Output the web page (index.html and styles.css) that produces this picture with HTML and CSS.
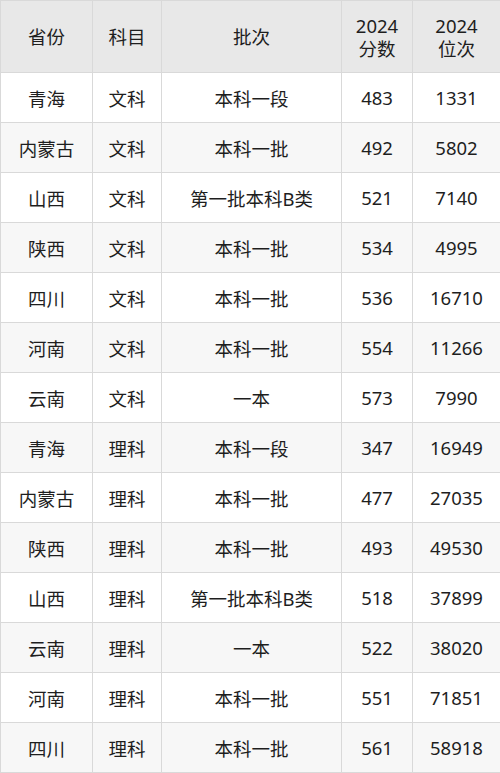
FILE: index.html
```html
<!DOCTYPE html>
<html lang="zh">
<head>
<meta charset="utf-8">
<link rel="stylesheet" href="styles.css">
</head>
<body>
<table class="score-table">
  <colgroup>
    <col class="c1"><col class="c2"><col class="c3"><col class="c4"><col class="c5">
  </colgroup>
  <thead>
    <tr><th>省份</th><th>科目</th><th>批次</th><th>2024<br>分数</th><th>2024<br>位次</th></tr>
  </thead>
  <tbody>
    <tr><td>青海</td><td>文科</td><td>本科一段</td><td>483</td><td>1331</td></tr>
    <tr><td>内蒙古</td><td>文科</td><td>本科一批</td><td>492</td><td>5802</td></tr>
    <tr><td>山西</td><td>文科</td><td>第一批本科B类</td><td>521</td><td>7140</td></tr>
    <tr><td>陕西</td><td>文科</td><td>本科一批</td><td>534</td><td>4995</td></tr>
    <tr><td>四川</td><td>文科</td><td>本科一批</td><td>536</td><td>16710</td></tr>
    <tr><td>河南</td><td>文科</td><td>本科一批</td><td>554</td><td>11266</td></tr>
    <tr><td>云南</td><td>文科</td><td>一本</td><td>573</td><td>7990</td></tr>
    <tr><td>青海</td><td>理科</td><td>本科一段</td><td>347</td><td>16949</td></tr>
    <tr><td>内蒙古</td><td>理科</td><td>本科一批</td><td>477</td><td>27035</td></tr>
    <tr><td>陕西</td><td>理科</td><td>本科一批</td><td>493</td><td>49530</td></tr>
    <tr><td>山西</td><td>理科</td><td>第一批本科B类</td><td>518</td><td>37899</td></tr>
    <tr><td>云南</td><td>理科</td><td>一本</td><td>522</td><td>38020</td></tr>
    <tr><td>河南</td><td>理科</td><td>本科一批</td><td>551</td><td>71851</td></tr>
    <tr><td>四川</td><td>理科</td><td>本科一批</td><td>561</td><td>58918</td></tr>
  </tbody>
</table>
</body>
</html>
```
FILE: styles.css
```css
html, body {
  margin: 0;
  padding: 0;
  background: #ffffff;
}
.score-table {
  width: 500px;
  border-collapse: collapse;
  table-layout: fixed;
  font-family: "Noto Sans", "Noto Sans CJK SC", sans-serif;
  font-size: 18.5px;
  color: #1e1e1e;
}
.c1 { width: 92px; }
.c2 { width: 69px; }
.c3 { width: 180px; }
.c4 { width: 71px; }
.c5 { width: 88px; }
.score-table th,
.score-table td {
  border: 1px solid #d9d9d9;
  text-align: center;
  vertical-align: middle;
  padding: 0;
}
.score-table th {
  height: 71px;
  background: #e8e8e8;
  font-weight: normal;
  line-height: 23px;
}
.score-table td {
  height: 49px;
}
.score-table tbody tr:nth-child(even) td {
  background: #f7f7f7;
}
```
